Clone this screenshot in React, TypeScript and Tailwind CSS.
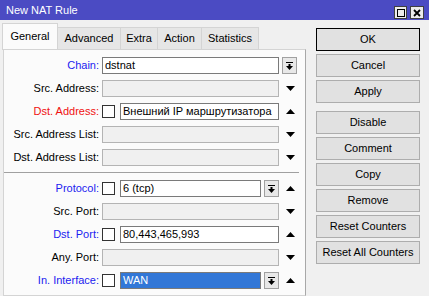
import React from "react";

function Up() {
  return (
    <svg width="9" height="5" viewBox="0 0 9 5">
      <polygon points="0,5 9,5 4.5,0" fill="#000" />
    </svg>
  );
}
function Down() {
  return (
    <svg width="9" height="5" viewBox="0 0 9 5">
      <polygon points="0,0 9,0 4.5,5" fill="#000" />
    </svg>
  );
}
function Slot({ children }: { children?: React.ReactNode }) {
  return <div className="ml-[3px] flex w-[17px] justify-center">{children}</div>;
}
function DropBtn() {
  return (
    <div className="ml-[3px] flex h-[17px] w-[15px] items-center justify-center border border-[#a0a0a0] bg-[#e8e8e8]">
      <svg width="7" height="8" viewBox="0 0 7 8">
        <rect x="0" y="0" width="7" height="1" fill="#000" />
        <rect x="2.5" y="2" width="2" height="2" fill="#000" />
        <polygon points="0,4 7,4 3.5,8" fill="#000" />
      </svg>
    </div>
  );
}
function Check() {
  return <div className="mr-[5px] h-[13px] w-[13px] border border-[#333333] bg-white" />;
}
function Input({ w, text, kind }: { w: string; text?: string; kind: "on" | "off" | "sel" }) {
  const cls =
    kind === "on"
      ? "border-[#7a7a7a] bg-white text-black"
      : kind === "off"
      ? "border-[#b4b4b4] bg-[#f0f0f0]"
      : "border-[#7a7a7a] bg-[#3277d7] text-white";
  return (
    <div className={`flex h-[17px] items-center overflow-hidden whitespace-nowrap border pl-[2px] ${w} ${cls}`}>
      {text}
    </div>
  );
}
function Row({ label, color, children }: { label: string; color?: string; children: React.ReactNode }) {
  return (
    <div className="flex h-[23px] shrink-0 items-center">
      <div className={`w-[95px] whitespace-nowrap text-right ${color ?? "text-black"}`}>{label}</div>
      <div className="ml-[3px] flex items-center">{children}</div>
    </div>
  );
}
function Btn({ label, def }: { label: string; def?: boolean }) {
  return (
    <div
      className={`flex h-[23px] w-[104px] shrink-0 items-center justify-center border bg-[#e1e1e1] ${
        def ? "border-black" : "border-[#adadad]"
      }`}
    >
      {label}
    </div>
  );
}

export default function App() {
  const blue = "text-[#1c1cf0]";
  return (
    <div className="flex h-[296px] w-[429px] flex-col overflow-hidden bg-[#f0f0f0] font-['Liberation_Sans',Arial,sans-serif] text-[11px] text-black">
      <div className="flex h-[20px] shrink-0 items-start bg-[#4b4bc3]">
        <div className="ml-[6px] mt-[4px] text-[11px] leading-[12px] text-white">New NAT Rule</div>
        <div className="ml-auto mr-[5px] mt-[6px] flex gap-[3px]">
          <div className="flex h-[13px] w-[13px] items-center justify-center border border-[#404040] bg-[#ececec]">
            <div className="h-[8px] w-[8px] border border-black" />
          </div>
          <div className="flex h-[13px] w-[14px] items-center justify-center border border-[#404040] bg-[#ececec]">
            <svg width="8" height="8" viewBox="0 0 8 8">
              <path d="M1 1 L7 7 M7 1 L1 7" stroke="#000" strokeWidth="1.8" />
            </svg>
          </div>
        </div>
      </div>
      <div className="flex min-h-0 flex-1">
        <div className="ml-[3px] flex w-[303px] flex-col pt-[3px]">
          <div className="flex h-[26px] shrink-0 items-end">
            <div className="-ml-[1px] -mb-[1px] flex h-[27px] w-[56px] items-center justify-center border border-b-0 border-[#d4d4d4] bg-[#fbfbfb] pb-[2px]">
              General
            </div>
            <div className="flex h-[22px] w-[63px] items-center justify-center border border-b-0 border-l-0 border-[#d4d4d4] bg-[#e6e6e6]">
              Advanced
            </div>
            <div className="flex h-[22px] w-[37px] items-center justify-center border border-b-0 border-l-0 border-[#d4d4d4] bg-[#e6e6e6]">
              Extra
            </div>
            <div className="flex h-[22px] w-[44px] items-center justify-center border border-b-0 border-l-0 border-[#d4d4d4] bg-[#e6e6e6]">
              Action
            </div>
            <div className="flex h-[22px] w-[57px] items-center justify-center border border-b-0 border-l-0 border-[#d4d4d4] bg-[#e6e6e6]">
              Statistics
            </div>
          </div>
          <div className="flex min-h-0 flex-1 flex-col overflow-hidden border border-r-[#a8a8a8] border-[#d4d4d4] bg-[#fbfbfb] pt-[4px]">
            <Row label="Chain:" color={blue}>
              <Input w="w-[177px]" kind="on" text="dstnat" />
              <DropBtn />
            </Row>
            <Row label="Src. Address:">
              <Input w="w-[177px]" kind="off" />
              <Slot>
                <Down />
              </Slot>
            </Row>
            <Row label="Dst. Address:" color="text-[#f01010]">
              <Check />
              <Input w="w-[159px]" kind="on" text="Внешний IP маршрутизатора" />
              <Slot>
                <Up />
              </Slot>
            </Row>
            <Row label="Src. Address List:">
              <Input w="w-[177px]" kind="off" />
              <Slot>
                <Down />
              </Slot>
            </Row>
            <Row label="Dst. Address List:">
              <Input w="w-[177px]" kind="off" />
              <Slot>
                <Down />
              </Slot>
            </Row>
            <div className="h-[8px] shrink-0 pt-[3px] pr-[6px]">
              <div className="h-px bg-[#a0a0a0]" />
            </div>
            <Row label="Protocol:" color={blue}>
              <Check />
              <Input w="w-[141px]" kind="on" text="6 (tcp)" />
              <DropBtn />
              <Slot>
                <Up />
              </Slot>
            </Row>
            <Row label="Src. Port:">
              <Input w="w-[177px]" kind="off" />
              <Slot>
                <Down />
              </Slot>
            </Row>
            <Row label="Dst. Port:" color={blue}>
              <Check />
              <Input w="w-[159px]" kind="on" text="80,443,465,993" />
              <Slot>
                <Up />
              </Slot>
            </Row>
            <Row label="Any. Port:">
              <Input w="w-[177px]" kind="off" />
              <Slot>
                <Down />
              </Slot>
            </Row>
            <Row label="In. Interface:" color={blue}>
              <Check />
              <Input w="w-[141px]" kind="sel" text="WAN" />
              <DropBtn />
              <Slot>
                <Up />
              </Slot>
            </Row>
            <Row label="">
              <Input w="w-[177px]" kind="off" />
              <Slot>
                <Down />
              </Slot>
            </Row>
          </div>
        </div>
        <div className="ml-[10px] flex flex-col pt-[8px]">
          <div className="flex flex-col gap-[3px]">
            <Btn label="OK" def />
            <Btn label="Cancel" />
            <Btn label="Apply" />
          </div>
          <div className="mt-[8px] flex flex-col gap-[3px]">
            <Btn label="Disable" />
            <Btn label="Comment" />
            <Btn label="Copy" />
            <Btn label="Remove" />
            <Btn label="Reset Counters" />
            <Btn label="Reset All Counters" />
          </div>
        </div>
      </div>
    </div>
  );
}
